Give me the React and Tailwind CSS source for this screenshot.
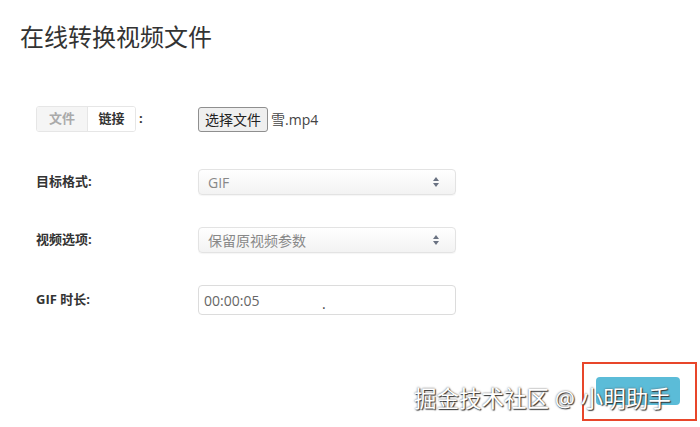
import React from "react";

const font = { fontFamily: '"Open Sans", "Noto Sans CJK SC", sans-serif' };

const Arrows = () => (
  <svg width="8" height="12" viewBox="0 0 8 12" className="text-gray-500">
    <path d="M4 1 L7 5 H1 Z" fill="currentColor" />
    <path d="M4 11 L7 7 H1 Z" fill="currentColor" />
  </svg>
);

const Select = ({ value }) => (
  <div className="w-[258px] h-[26px] rounded-[4px] border border-[#e3e3e3] bg-gradient-to-b from-white to-[#f3f3f3] flex items-center justify-between pl-[9px] pr-[15px] text-[14px] text-[#888] shadow-[0_1px_1px_rgba(0,0,0,0.04)]">
    <span>{value}</span>
    <Arrows />
  </div>
);

const Row = ({ label, children, className = "" }) => (
  <div className={`flex items-center ${className}`}>
    <div className="w-[162px] text-[13px] font-bold text-[#333]">{label}</div>
    {children}
  </div>
);

export default function App() {
  return (
    <div className="w-[700px] h-[427px] bg-white relative overflow-hidden" style={font}>
      <h1 className="pt-[21px] pl-[20px] text-[24px] text-[#333] leading-[32px]">在线转换视频文件</h1>

      <div className="pl-[36px] pt-[53px]">
        <div className="flex items-center">
          <div className="w-[162px] flex items-center">
            <div className="flex h-[26px] rounded-[3px] border border-[#e6e6e6] text-[13px] font-bold overflow-hidden">
              <div className="w-[50px] flex items-center justify-center bg-[#f5f5f5] text-[#aaa]">文件</div>
              <div className="w-[48px] flex items-center justify-center bg-white text-[#333] border-l border-[#e6e6e6]">链接</div>
            </div>
            <span className="ml-[3px] text-[13px] font-bold text-[#333]">:</span>
          </div>
          <button className="h-[25px] px-[6px] rounded-[3px] border border-[#8f8f8f] bg-[#efefef] text-[14px] text-[#222]">选择文件</button>
          <span className="ml-[3px] text-[14px] text-[#444]">雪.mp4</span>
        </div>

        <Row label="目标格式:" className="mt-[37px]">
          <Select value="GIF" />
        </Row>

        <Row label="视频选项:" className="mt-[32px]">
          <Select value="保留原视频参数" />
        </Row>

        <Row label="GIF 时长:" className="mt-[32px]">
          <div className="w-[258px] h-[30px] rounded-[4px] border border-[#dcdcdc] flex items-center pl-[5px] text-[14px] text-[#666] relative">
            00:00:05
            <span className="absolute left-[123px] top-[7px] text-[#444]">.</span>
          </div>
        </Row>
      </div>

      <div className="absolute left-[582px] top-[362px] w-[115px] h-[59px] border-2 border-[#e8462a]">
        <div className="absolute left-[12px] top-[13px] w-[84px] h-[28px] rounded-[4px] bg-[#5bbcd8]" />
      </div>
      <div
        className="absolute left-[414px] top-[384px] text-[22.5px] text-white leading-[30px] whitespace-nowrap"
        style={{ textShadow: "1px 1px 1px #333, 0 0 2px #555" }}
      >
        掘金技术社区 @ 小明助手
      </div>
    </div>
  );
}
